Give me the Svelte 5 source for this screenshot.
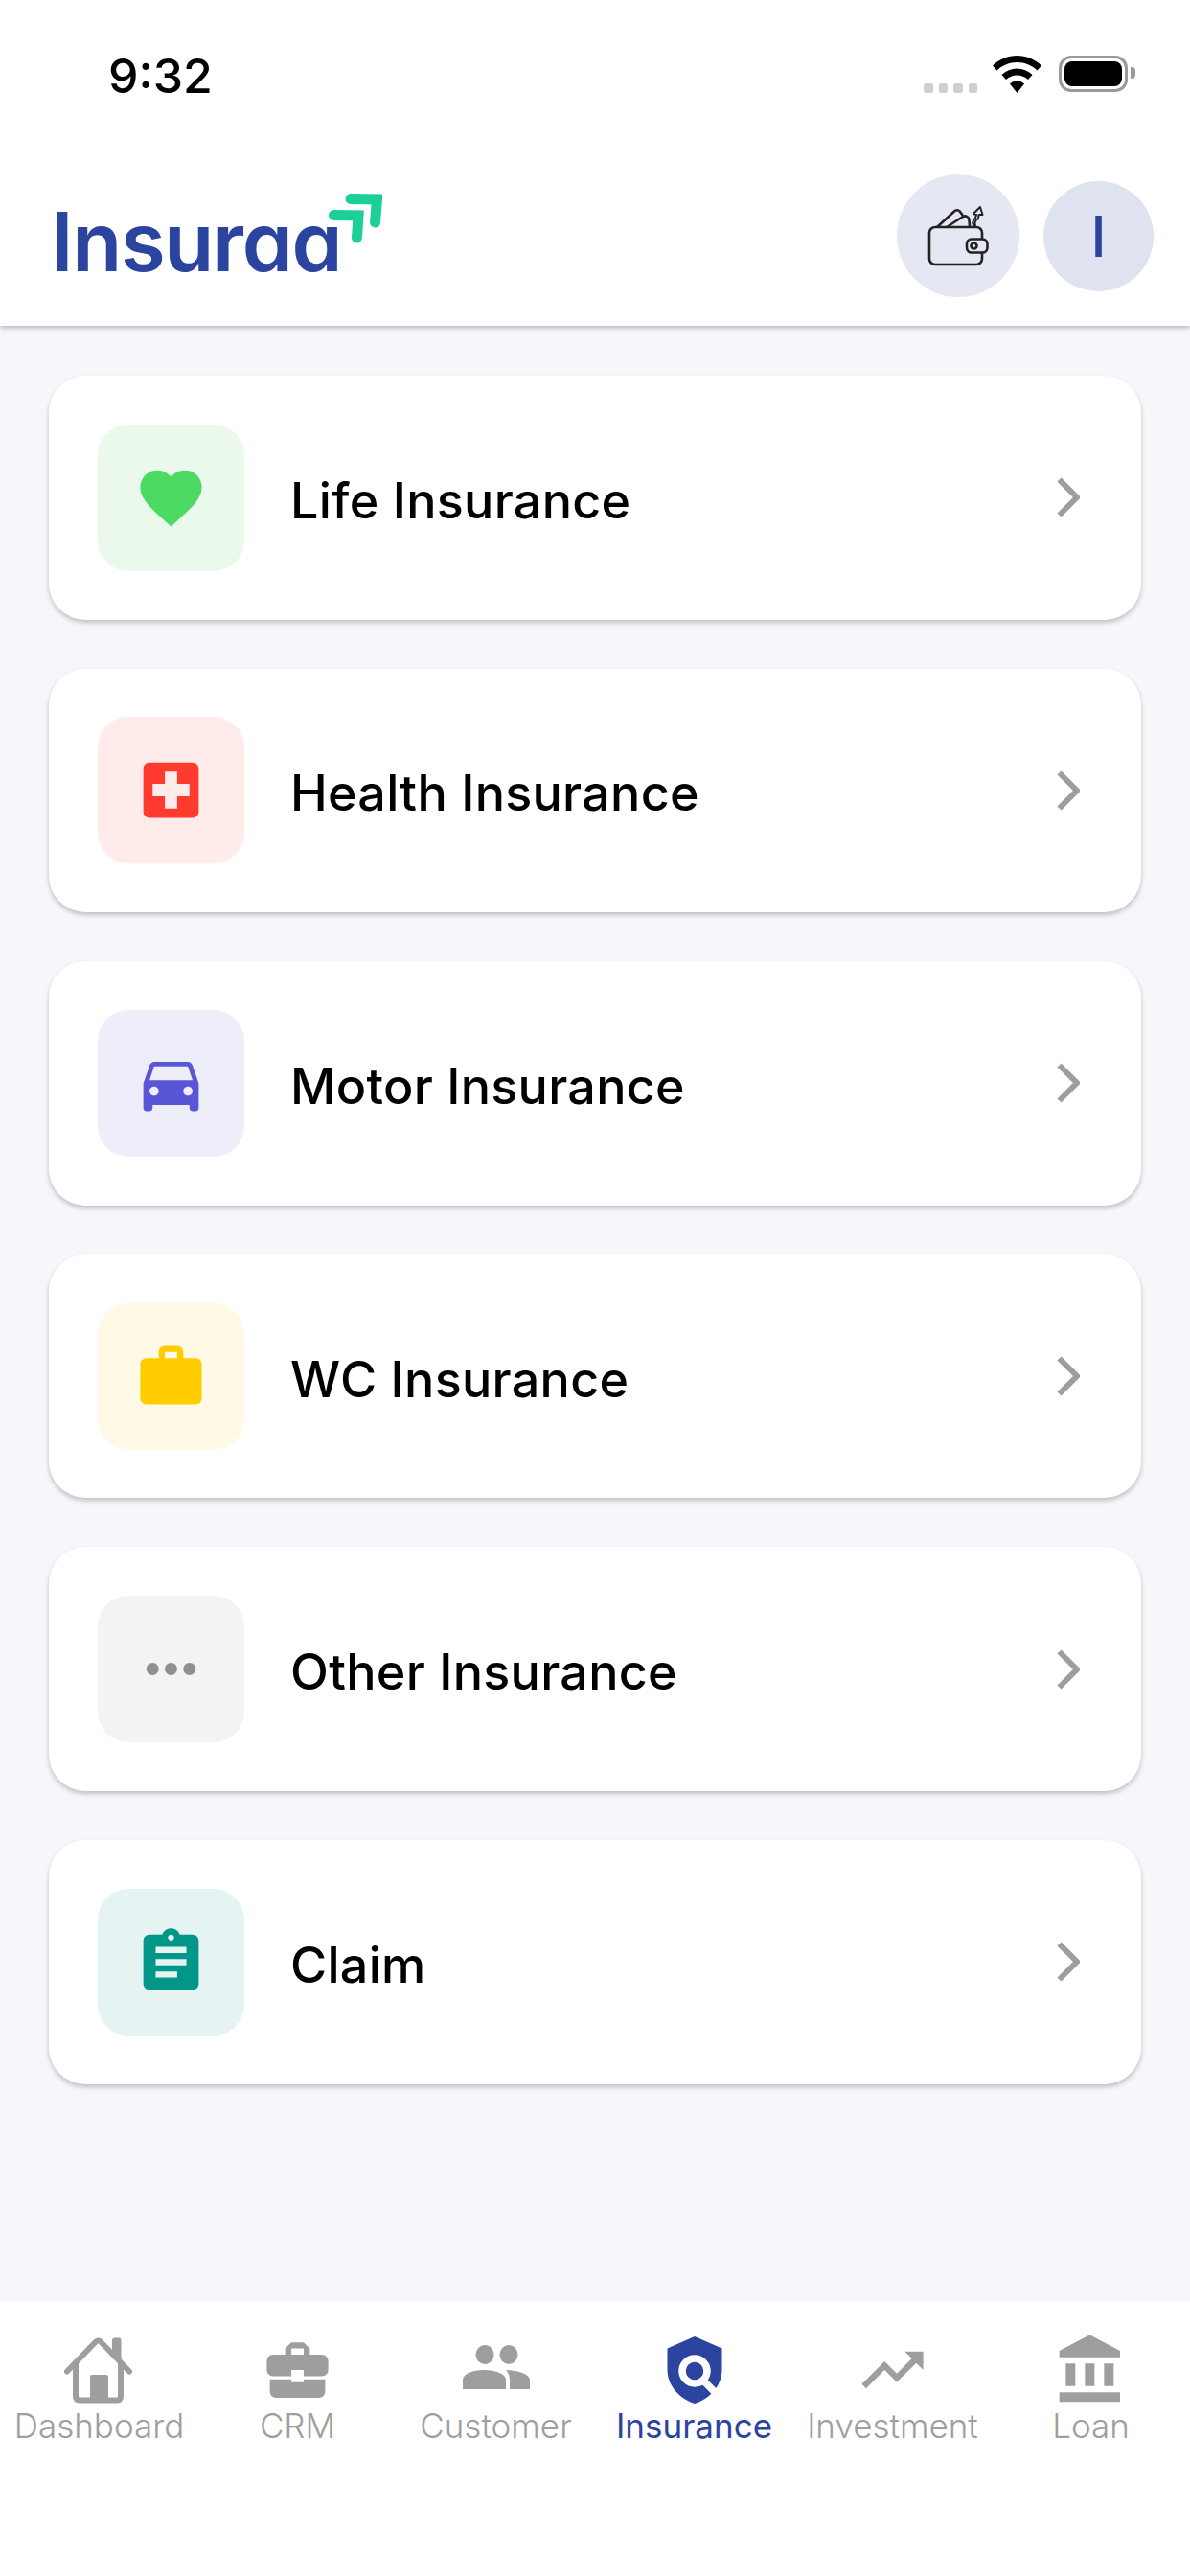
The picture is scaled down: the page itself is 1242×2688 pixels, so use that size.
<script>
  const items = [
    { name: "Life Insurance", color: "#4cd964", bg: "#ebf9ed", d: "M12 21.35l-1.45-1.32C5.4 15.36 2 12.28 2 8.5 2 5.42 4.42 3 7.5 3c1.74 0 3.41.81 4.5 2.09C13.09 3.81 14.76 3 16.5 3 19.58 3 22 5.42 22 8.5c0 3.78-3.4 6.86-8.55 11.54L12 21.35z" },
    { name: "Health Insurance", color: "#ff3b30", bg: "#ffebea", d: "M19 3H5c-1.1 0-1.99.9-1.99 2L3 19c0 1.1.9 2 2 2h14c1.1 0 2-.9 2-2V5c0-1.1-.9-2-2-2zm-1 11h-4v4h-4v-4H6v-4h4V6h4v4h4v4z" },
    { name: "Motor Insurance", color: "#5856d6", bg: "#eeeefb", d: "M18.92 6.01C18.72 5.42 18.16 5 17.5 5h-11c-.66 0-1.21.42-1.42 1.01L3 12v8c0 .55.45 1 1 1h1c.55 0 1-.45 1-1v-1h12v1c0 .55.45 1 1 1h1c.55 0 1-.45 1-1v-8l-2.08-5.99zM6.5 16c-.83 0-1.5-.67-1.5-1.5S5.67 13 6.5 13s1.5.67 1.5 1.5S7.33 16 6.5 16zm11 0c-.83 0-1.5-.67-1.5-1.5s.67-1.5 1.5-1.5 1.5.67 1.5 1.5-.67 1.5-1.5 1.5zM5 11l1.5-4.5h11L19 11H5z" },
    { name: "WC Insurance", color: "#ffcc00", bg: "#fff9e5", d: "M20 6h-4V4c0-1.11-.89-2-2-2h-4c-1.11 0-2 .89-2 2v2H4c-1.11 0-1.99.89-1.99 2L2 19c0 1.11.89 2 2 2h16c1.11 0 2-.89 2-2V8c0-1.11-.89-2-2-2zm-6 0h-4V4h4v2z" },
    { name: "Other Insurance", color: "#8e8e93", bg: "#f3f3f4", d: "M6 10c-1.1 0-2 .9-2 2s.9 2 2 2 2-.9 2-2-.9-2-2-2zm12 0c-1.1 0-2 .9-2 2s.9 2 2 2 2-.9 2-2-.9-2-2-2zm-6 0c-1.1 0-2 .9-2 2s.9 2 2 2 2-.9 2-2-.9-2-2-2z" },
    { name: "Claim", color: "#009688", bg: "#e5f4f3", d: "M19 3h-4.18C14.4 1.84 13.3 1 12 1c-1.3 0-2.4.84-2.82 2H5c-1.1 0-2 .9-2 2v14c0 1.1.9 2 2 2h14c1.1 0 2-.9 2-2V5c0-1.1-.9-2-2-2zm-7 0c.55 0 1 .45 1 1s-.45 1-1 1-1-.45-1-1 .45-1 1-1zm2 14H7v-2h7v2zm3-4H7v-2h10v2zm0-4H7V7h10v2z" },
  ];
</script>

<div class="screen">
  <header class="top">
    <div class="status">
      <span class="time">9:32</span>
      <div class="status-right">
        <div class="signal"><i></i><i></i><i></i><i></i></div>
        <svg class="wifi" viewBox="0 0 51 39" width="51" height="39">
          <path d="M25.5 0C35 0 44 3.800 51 10.500L46.500 15.500C40.800 10 33.500 7 25.500 7S10.200 10 4.500 15.500L0 10.500C7 3.800 16 0 25.500 0Z" />
          <path d="M25.500 13.500C31.500 13.500 37 15.800 41.500 20L37 25C33.800 22 29.800 20.500 25.500 20.500S17.200 22 14 25L9.500 20C14 15.800 19.500 13.500 25.500 13.500Z" />
          <path d="M25.500 26.500C28.500 26.500 31 27.500 33 29.500L25.500 39L18 29.500C20 27.500 22.500 26.500 25.500 26.500Z" />
        </svg>
        <div class="battery"><span></span></div>
      </div>
    </div>
    <div class="brand-row">
      <div class="logo">
        <span class="logo-text">Insuraa</span>
        <svg class="logo-arrows" viewBox="0 0 56 52" width="56" height="52">
          <path d="M23 5.500L50.500 6L48.500 30" />
          <path d="M5.500 22.500L31 23L29.500 46" />
        </svg>
      </div>
      <div class="actions">
        <div class="wallet">
          <svg viewBox="0 0 62 62" width="62" height="62">
            <rect x="1" y="22" width="55" height="39" rx="6" />
            <rect x="40" y="34.500" width="21.500" height="14" rx="5" fill="#e5e7f3" />
            <circle cx="47.500" cy="41.500" r="3" />
            <path d="M9 22L27 5.500C29 3.500 32 4 33.500 6.500L36 10" />
            <path d="M19 22L36 11C39 9.500 42 11 42.500 14.500L43 22" />
            <path class="thin" d="M49 20C47.500 17 49 15 52 13L52.500 9H56.500L54 1L47 8L50 9L49 12.500C46 15 45.500 17.500 47 20Z" />
          </svg>
        </div>
        <div class="avatar">I</div>
      </div>
    </div>
  </header>

  <main class="list">
    {#each items as item}
      <div class="card">
        <div class="icon-box" style="background: {item.bg}">
          <svg viewBox="0 0 24 24" width="77" height="77"><path d={item.d} fill={item.color} /></svg>
        </div>
        <span class="name">{item.name}</span>
        <svg class="chevron" viewBox="0 0 24 42" width="24" height="42">
          <path d="M2.500 2.500L21 21L2.500 39.500" />
        </svg>
      </div>
    {/each}
  </main>

  <nav class="tabs">
    <div class="tab">
      <svg class="tab-icon" viewBox="0 0 80 72" width="80" height="72">
        <path class="house" d="M6 37.500L36 6.500C37.500 5 39.500 5 41 6.500L71 37.500" />
        <path class="house" d="M15 30V63C15 66 16.500 67.500 19 67.500H58C60.500 67.500 62 66 62 63V30" />
        <path class="fill" d="M53 5C53 3.500 54 2.500 55.500 2.500H60C61.500 2.500 62.500 3.500 62.500 5V29L53 19Z" />
        <rect class="fill" x="30" y="41" width="19" height="25" rx="2" />
      </svg>
      <span>Dashboard</span>
    </div>
    <div class="tab">
      <svg class="tab-icon" viewBox="0 0 24 24" width="77" height="77"><path class="fill" d="M10 16v-1H3.010L3 19c0 1.110.89 2 2 2h14c1.110 0 2-.89 2-2v-4h-7v1h-4zm10-9h-4.010V5l-2-2h-4l-2 2v2H4c-1.100 0-2 .9-2 2v3c0 1.110.89 2 2 2h6v-2h4v2h6c1.100 0 2-.9 2-2V9c0-1.100-.9-2-2-2zm-6 0h-4V5h4v2z" /></svg>
      <span>CRM</span>
    </div>
    <div class="tab">
      <svg class="tab-icon" viewBox="0 0 76 72" width="76" height="72">
        <ellipse class="fill" cx="26" cy="20" rx="9.500" ry="10" />
        <ellipse class="fill" cx="51" cy="20" rx="9.500" ry="10" />
        <path class="fill" d="M3 56V46C3 40 14 36 25 36C36 36 48 40 48 46V56Z" />
        <path class="fill" d="M48 36C60 36.500 73 40 73 46.500V56H52V46C52 42 50.500 39 48 36Z" />
      </svg>
      <span>Customer</span>
    </div>
    <div class="tab active">
      <svg class="tab-icon" viewBox="0 0 60 72" width="60" height="72">
        <path d="M30 1L58.500 13.500V36C58.500 52 46 66 30 71C14 66 1.500 52 1.500 36V13.500Z" fill="#2b44a0" />
        <circle cx="30" cy="37" r="13" fill="none" stroke="#fff" stroke-width="7.500" />
        <path d="M39 47L50.500 58.500" stroke="#fff" stroke-width="7.500" />
      </svg>
      <span>Insurance</span>
    </div>
    <div class="tab">
      <svg class="tab-icon" viewBox="0 0 24 24" width="77" height="77"><path class="fill" d="M16 6l2.290 2.290-4.880 4.880-4-4L2 16.590 3.410 18l6-6 4 4 6.300-6.290L22 12V6z" /></svg>
      <span>Investment</span>
    </div>
    <div class="tab">
      <svg class="tab-icon" viewBox="0 0 24 24" width="80" height="80"><path class="fill" d="M4 10v7h3v-7H4zm6 0v7h3v-7h-3zM2 22h19v-3H2v3zm14-12v7h3v-7h-3zm-4.500-9L2 6v2h19V6l-9.500-5z" /></svg>
      <span>Loan</span>
    </div>
  </nav>
</div>

<style>
  :global(body) {
    margin: 0;
    background: #f6f7fb;
    font-family: Inter, "Liberation Sans", sans-serif;
  }

  .screen {
    width: 1242px;
    height: 2688px;
    display: flex;
    flex-direction: column;
    overflow: hidden;
    background: #f6f7fb;
  }

  .top {
    height: 340px;
    flex: none;
    display: flex;
    flex-direction: column;
    background: #fff;
    box-shadow: 0 2px 5px rgba(0, 0, 0, 0.28);
    position: relative;
  }

  .status {
    height: 150px;
    flex: none;
    display: flex;
    align-items: flex-start;
    justify-content: space-between;
    box-sizing: border-box;
    padding: 48px 65px 0 113px;
  }

  .time {
    font-size: 50px;
    font-weight: 500;
    line-height: 62px;
    color: #000;
  }

  .status-right {
    display: flex;
    align-items: flex-start;
    padding-top: 10px;
  }

  .signal {
    display: flex;
    gap: 6px;
    margin-top: 29px;
    margin-right: 16px;
  }

  .signal i {
    width: 9.500px;
    height: 10px;
    border-radius: 3px;
    background: #cfcfcf;
  }

  .wifi {
    fill: #000;
    margin-right: 18px;
  }

  .battery {
    width: 72px;
    height: 38px;
    box-sizing: border-box;
    border: 3.500px solid #9a9a9a;
    border-radius: 13px;
    padding: 3px;
    position: relative;
  }

  .battery span {
    display: block;
    height: 100%;
    border-radius: 8px;
    background: #000;
  }

  .battery::after {
    content: "";
    position: absolute;
    right: -11px;
    top: 9px;
    width: 5px;
    height: 12px;
    border-radius: 0 4px 4px 0;
    background: #9a9a9a;
  }

  .brand-row {
    flex: 1;
    display: flex;
    align-items: flex-start;
    justify-content: space-between;
    padding: 32px 38px 0 53px;
  }

  .logo {
    position: relative;
    width: 346px;
    padding-top: 31px;
  }

  .logo-text {
    display: block;
    font-size: 85px;
    font-weight: 600;
    line-height: 80px;
    color: #2b44a0;
    font-feature-settings: "cv11" 1;
    letter-spacing: -1.300px;
  }

  .logo-arrows {
    position: absolute;
    left: 290px;
    top: 20px;
    fill: none;
    stroke: #1bcf98;
    stroke-width: 11px;
    stroke-linecap: round;
  }

  .actions {
    display: flex;
    align-items: center;
    gap: 25px;
  }

  .wallet {
    width: 128px;
    height: 128px;
    border-radius: 50%;
    background: #e5e7f3;
    display: flex;
    align-items: center;
    justify-content: center;
  }

  .wallet svg {
    fill: none;
    stroke: #222;
    stroke-width: 2.600px;
    stroke-linejoin: round;
    overflow: visible;
  }

  .wallet .thin {
    stroke-width: 2px;
  }

  .avatar {
    width: 115px;
    height: 115px;
    border-radius: 50%;
    background: #dfe3f0;
    color: #2b44a0;
    font-size: 59px;
    font-weight: 500;
    display: flex;
    align-items: center;
    justify-content: center;
  }

  .list {
    flex: 1;
    display: flex;
    flex-direction: column;
    gap: 51px;
    padding: 52px 51px 0;
  }

  .card {
    height: 254.600px;
    flex: none;
    box-sizing: border-box;
    display: flex;
    align-items: center;
    padding: 0 64px 0 51px;
    background: #fff;
    border-radius: 38px;
    box-shadow: 0 3px 5px rgba(0, 0, 0, 0.22);
  }

  .icon-box {
    width: 153px;
    height: 153px;
    flex: none;
    border-radius: 32px;
    display: flex;
    align-items: center;
    justify-content: center;
  }

  .name {
    flex: 1;
    margin-left: 48px;
    margin-top: 6px;
    font-size: 52px;
    font-weight: 500;
    letter-spacing: 0.3px;
    color: #000;
  }

  .chevron {
    fill: none;
    stroke: #9e9e9e;
    stroke-width: 6px;
  }

  .tabs {
    height: 287px;
    flex: none;
    box-sizing: border-box;
    display: grid;
    grid-template-columns: repeat(6, 207px);
    padding-top: 32px;
    background: #fff;
  }

  .tab {
    display: flex;
    flex-direction: column;
    align-items: center;
    color: #9e9e9e;
    font-size: 35px;
    font-weight: 300;
    line-height: 42px;
  }

  .tab-icon {
    height: 80px;
    margin-bottom: -3px;
  }

  .tab.active {
    color: #2b44a0;
    font-weight: 400;
  }

  .fill {
    fill: #9e9e9e;
  }

  .house {
    fill: none;
    stroke: #9e9e9e;
    stroke-width: 6px;
    stroke-linecap: round;
  }
</style>
